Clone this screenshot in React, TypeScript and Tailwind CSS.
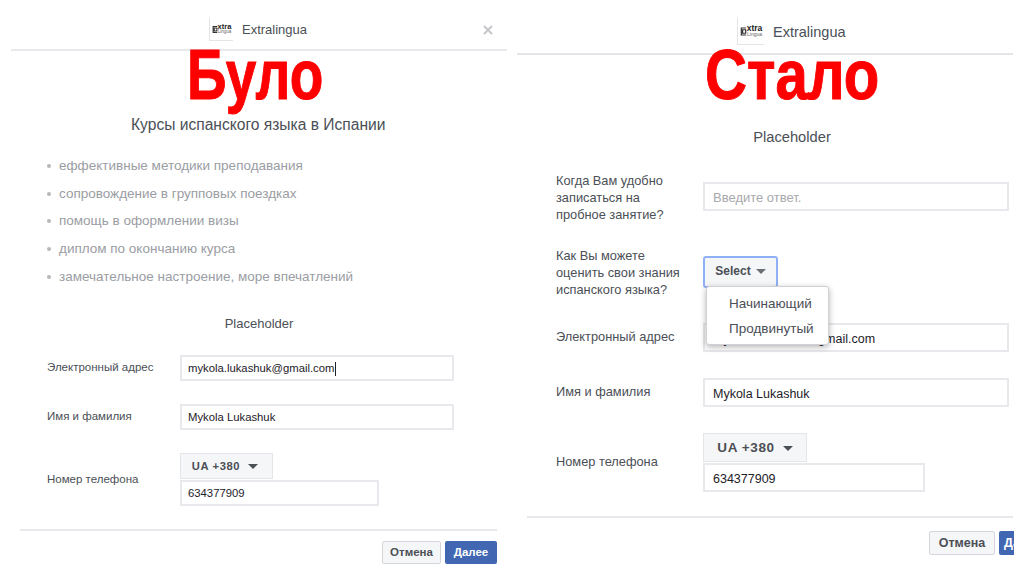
const sans = '[font-family:"Liberation_Sans",Arial,sans-serif]';

function Logo({ size }: { size: 'sm' | 'lg' }) {
  const lg = size === 'lg';
  return (
    <div
      className={`flex items-center justify-center border-l border-b border-[#e4e5e8] ${lg ? 'w-[27px] h-[27px]' : 'w-[24px] h-[23px]'}`}
    >
      <div className="flex items-center">
        <svg viewBox="0 0 8 10" className={lg ? 'w-[7px] h-[11px]' : 'w-[6px] h-[9px]'}>
          <path d="M7 1H1.5v8H7M3 3h3.5v4H3z" fill="none" stroke="#333" strokeWidth="1.4" />
        </svg>
        <div className="flex flex-col items-center leading-none text-[#222]">
          <span className={`font-bold ${lg ? 'text-[8.5px] leading-[7px]' : 'text-[7.5px] leading-[6px]'}`}>xtra</span>
          <span className={`text-[#666] ${lg ? 'text-[5px] leading-[5px]' : 'text-[4.5px] leading-[4px]'}`}>Lingua</span>
        </div>
      </div>
    </div>
  );
}

function Field({ value, className, textClass, cursor }: { value: string; className: string; textClass: string; cursor?: boolean }) {
  return (
    <div className={`flex items-center bg-white border-2 border-[#e8e9ec] ${className}`}>
      <span className={`text-[#1d2129] ${textClass}`}>{value}</span>
      {cursor && <span className="w-px h-[14px] bg-[#1d2129] ml-px" />}
    </div>
  );
}

function Caret({ className }: { className: string }) {
  return <span className={`inline-block w-0 h-0 border-x-[5px] border-x-transparent border-t-[5px] ${className}`} />;
}

function Before() {
  const bullets = [
    'еффективные методики преподавания',
    'сопровождение в групповых поездках',
    'помощь в оформлении визы',
    'диплом по окончанию курса',
    'замечательное настроение, море впечатлений',
  ];
  return (
    <div className="relative w-[512px] h-[576px] shrink-0 overflow-hidden">
      <div className="relative ml-[11px] mr-[5px] h-[51px] pt-[18px] border-b-2 border-[#e8e9ec]">
        <div className="flex items-center ml-[198px]">
          <Logo size="sm" />
          <span className="ml-[9px] text-[13px] text-[#4b4f56]">Extralingua</span>
        </div>
        <svg viewBox="0 0 10 10" className="absolute right-[14px] top-[25px] w-[10px] h-[10px]">
          <path d="M1 1l8 8M9 1l-8 8" stroke="#c4c6ca" strokeWidth="2" />
        </svg>
      </div>
      <div className="mt-[64px] ml-[131px] text-[15.6px] leading-[20px] text-[#4b4f56] whitespace-nowrap">
        Курсы испанского языка в Испании
      </div>
      <ul className="mt-[17px] ml-[47px] flex flex-col">
        {bullets.map((b) => (
          <li key={b} className="flex items-center h-[27.75px] text-[13.5px] text-[#9a9da3]">
            <span className="w-[4px] h-[4px] rounded-full bg-[#b5b7bb] mr-[8px]" />
            {b}
          </li>
        ))}
      </ul>
      <div className="mt-[24px] text-center ml-[6px] text-[13px] leading-[18px] text-[#4b4f56]">Placeholder</div>
      <div className="mt-[22px] ml-[47px] flex flex-col">
        <div className="flex h-[26px]">
          <span className="w-[132.5px] text-[11.5px] leading-[24px] text-[#4b4f56]">Электронный адрес</span>
          <Field value="mykola.lukashuk@gmail.com" cursor className="w-[274.5px] h-[26px] pl-[6.5px] pt-[2px]" textClass="text-[11.3px]" />
        </div>
        <div className="flex h-[26px] mt-[23px]">
          <span className="w-[132.5px] text-[11.5px] leading-[24px] text-[#4b4f56]">Имя и фамилия</span>
          <Field value="Mykola Lukashuk" className="w-[274.5px] h-[26px] pl-[6.5px] pt-[2px]" textClass="text-[11.3px]" />
        </div>
        <div className="flex mt-[23px]">
          <span className="w-[132.5px] text-[11.5px] leading-[53px] text-[#4b4f56]">Номер телефона</span>
          <div className="flex flex-col gap-px">
            <div className="flex items-center justify-center gap-[8px] w-[93px] h-[26px] pt-[2px] pr-[2px] bg-[#f5f6f7] border border-[#e4e5e8] text-[11.2px] font-bold tracking-[0.6px] text-[#4b4f56]">
              UA +380 <Caret className="border-t-[#4b4f56]" />
            </div>
            <Field value="634377909" className="w-[199px] h-[26px] pl-[6.5px] pt-[2px]" textClass="text-[11.3px]" />
          </div>
        </div>
      </div>
      <div className="mt-[23px] ml-[20px] mr-[15px] h-[2px] bg-[#e8e9ec]" />
      <div className="mt-[10px] mr-[15px] flex justify-end gap-[4px]">
        <div className="flex items-center justify-center w-[59px] h-[23px] bg-[#f5f6f7] border border-[#d5d7db] rounded-[2px] text-[11.5px] font-bold text-[#4b4f56]">
          Отмена
        </div>
        <div className="flex items-center justify-center w-[52px] h-[23px] bg-[#4267b2] rounded-[2px] text-[11.5px] font-bold text-white">
          Далее
        </div>
      </div>
      <div className="absolute left-[187px] top-[33px] text-[#ff0000] pointer-events-none">
        <span className="block origin-left scale-x-[0.785] whitespace-nowrap text-[70px] leading-[84px] font-bold [-webkit-text-stroke:1px_#ff0000]">Було</span>
      </div>
    </div>
  );
}

function After() {
  return (
    <div className="relative w-[512px] h-[576px] shrink-0 overflow-hidden">
      <div className="ml-[5px] mr-[11px] h-[55px] pt-[18px] border-b-2 border-[#e4e5e8]">
        <div className="flex items-center ml-[220px]">
          <Logo size="lg" />
          <span className="ml-[9px] pt-[2px] text-[14.5px] text-[#4b4f56]">Extralingua</span>
        </div>
      </div>
      <div className="mt-[72px] text-center ml-[48px] text-[14.7px] leading-[20px] text-[#4b4f56]">Placeholder</div>
      <div className="mt-[25px] ml-[44px] flex flex-col">
        <div className="flex">
          <span className="w-[147px] text-[12.8px] leading-[17px] text-[#4b4f56]">
            Когда Вам удобно<br />записаться на<br />пробное занятие?
          </span>
          <div className="mt-[10px] flex items-center w-[306px] h-[29px] pl-[8px] pt-[3px] bg-white border-2 border-[#e8e9ec] text-[13px] text-[#a7a9ad]">
            Введите ответ.
          </div>
        </div>
        <div className="relative flex mt-[24px]">
          <span className="w-[147px] text-[12.8px] leading-[17px] text-[#4b4f56]">
            Как Вы можете<br />оценить свои знания<br />испанского языка?
          </span>
          <div className="mt-[9px] flex items-center justify-center gap-[5px] w-[75px] h-[32px] pb-[2px] bg-[#f5f6f7] border-2 border-[#8fb0f5] rounded-[3px] text-[12px] font-bold text-[#4b4f56]">
            Select <Caret className="border-t-[#6b6f76]" />
          </div>
          <div className="absolute z-10 left-[150px] top-[39px] w-[123px] h-[59px] flex flex-col justify-center gap-[8px] pl-[22px] bg-white border border-[#d0d1d5] rounded-[3px] shadow-[0_2px_6px_rgba(0,0,0,0.3)] text-[13.5px] leading-[17px] text-[#4b4f56]">
            <span>Начинающий</span>
            <span>Продвинутый</span>
          </div>
        </div>
        <div className="flex mt-[25px]">
          <span className="w-[147px] text-[12.8px] leading-[28px] text-[#4b4f56]">Электронный адрес</span>
          <Field value="mykola.lukashuk@gmail.com" className="w-[306px] h-[29px] pl-[8px] pt-[4px]" textClass="text-[12.5px]" />
        </div>
        <div className="flex mt-[26px]">
          <span className="w-[147px] text-[12.8px] leading-[28px] text-[#4b4f56]">Имя и фамилия</span>
          <Field value="Mykola Lukashuk" className="w-[306px] h-[29px] pl-[8px] pt-[4px]" textClass="text-[12.5px]" />
        </div>
        <div className="flex mt-[26px]">
          <span className="w-[147px] text-[12.8px] leading-[58px] text-[#4b4f56]">Номер телефона</span>
          <div className="flex flex-col gap-px">
            <div className="flex items-center justify-center gap-[8px] w-[104px] h-[29px] pt-[2px] bg-[#f5f6f7] border border-[#e4e5e8] text-[13.5px] font-bold tracking-[0.6px] text-[#4b4f56]">
              UA +380 <Caret className="border-t-[#4b4f56]" />
            </div>
            <Field value="634377909" className="w-[222px] h-[29px] pl-[8px] pt-[4px]" textClass="text-[12.5px]" />
          </div>
        </div>
      </div>
      <div className="mt-[24px] ml-[15px] mr-[11px] h-[2px] bg-[#e8e9ec]" />
      <div className="mt-[13px] mr-[10px] flex justify-end gap-[4px] overflow-hidden">
        <div className="flex items-center justify-center w-[66px] h-[24px] bg-[#f5f6f7] border border-[#d5d7db] rounded-[2px] text-[12.5px] font-bold text-[#4b4f56]">
          Отмена
        </div>
        <div className="w-[15px] h-[24px] overflow-hidden bg-[#4267b2] rounded-l-[2px] pl-[5px] text-[12.5px] leading-[24px] font-bold text-white">
          Далее
        </div>
      </div>
      <div className="absolute left-[193px] top-[33px] text-[#ff0000] pointer-events-none">
        <span className="block origin-left scale-x-[0.83] whitespace-nowrap text-[70px] leading-[84px] font-bold [-webkit-text-stroke:1px_#ff0000]">Стало</span>
      </div>
    </div>
  );
}

export default function App() {
  return (
    <div className={`flex w-[1024px] h-[576px] overflow-hidden bg-white ${sans}`}>
      <Before />
      <After />
    </div>
  );
}
